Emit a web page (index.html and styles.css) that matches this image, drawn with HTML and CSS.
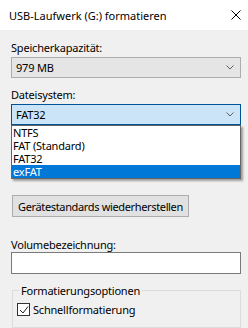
FILE: index.html
```
<!DOCTYPE html>
<html>
  <head>
    <title>USB-Laufwerk (G:) formatieren</title>
    <link rel="stylesheet" href="styles.css">
  </head>
  <body>
    <div class="titlebar">
      <span class="title">USB-Laufwerk (G:) formatieren</span>
      <svg class="close" width="10" height="10" viewBox="0 0 10 10"><path d="M0.5 0.5L9.5 9.5M9.5 0.5L0.5 9.5" stroke="#000" stroke-width="1" fill="none"/></svg>
    </div>

    <div class="content">
      <div class="label">Speicherkapazität:</div>
      <div class="combo">
        <span>979 MB</span>
        <svg class="chevron" width="8" height="5" viewBox="0 0 8 5"><path d="M0.5 0.5L4 4L7.5 0.5" stroke="#606060" fill="none"/></svg>
      </div>

      <div class="label">Dateisystem:</div>
      <div class="dropdown">
        <div class="combo combo-open">
          <span>FAT32</span>
          <svg class="chevron" width="8" height="5" viewBox="0 0 8 5"><path d="M0.5 0.5L4 4L7.5 0.5" stroke="#606060" fill="none"/></svg>
        </div>
        <ul class="list">
          <li>NTFS</li>
          <li>FAT (Standard)</li>
          <li>FAT32</li>
          <li class="selected">exFAT</li>
        </ul>
      </div>

      <button class="btn">Gerätestandards wiederherstellen</button>

      <div class="label label-volume">Volumebezeichnung:</div>
      <div class="textbox"></div>

      <fieldset class="group">
        <legend>Formatierungsoptionen</legend>
        <label class="check">
          <span class="box"><svg width="10" height="10" viewBox="0 0 10 10"><path d="M1 5L4 8L9 1.5" stroke="#222" stroke-width="1" fill="none"/></svg></span>
          Schnellformatierung
        </label>
      </fieldset>
    </div>
  </body>
</html>
```

FILE: styles.css
```
  body {
    margin: 0;
    background-color: #f0f0f0;
    font-family: "Noto Sans", "Open Sans", sans-serif;
    font-size: 11px;
    letter-spacing: -0.2px;
    color: #000;
    overflow: hidden;
  }
  /* window title */
  .titlebar {
    height: 30px;
    background-color: #fff;
    display: flex;
    align-items: center;
    padding: 0 7px 0 9px;
  }
  .title {
    flex: 1;
    font-size: 11px;
    letter-spacing: 0;
  }
  .close {
    margin-bottom: 1px;
  }
  .content {
    padding: 10px 7px 0 11px;
  }
  .label {
    line-height: 15px;
    height: 15px;
  }
  /* combo boxes */
  .combo {
    margin-top: 2px;
    height: 19px;
    border: 1px solid #adadad;
    background-color: #e5e5e5;
    display: flex;
    align-items: center;
    padding: 0 6px 0 4px;
    margin-bottom: 9px;
  }
  .combo span {
    flex: 1;
  }
  .dropdown {
    position: relative;
    margin-bottom: 70px;
  }
  .combo-open {
    background-color: #cce4f7;
    border-color: #005499;
    margin-bottom: 0;
  }
  .list {
    position: absolute;
    left: 0;
    right: 0;
    top: 100%;
    margin: 0;
    padding: 0;
    list-style: none;
    background-color: #fff;
    border: 1px solid #646464;
    box-shadow: 2px 2px 2px rgba(0, 0, 0, 0.35);
  }
  .list li {
    height: 13px;
    line-height: 13px;
    padding-left: 1px;
  }
  .list .selected {
    background-color: #0078d7;
    color: #fff;
  }
  /* button */
  .btn {
    display: block;
    margin-left: 1px;
    height: 22px;
    padding: 0 5px;
    font-family: inherit;
    font-size: 11px;
    letter-spacing: -0.35px;
    background-color: #e1e1e1;
    border: 1px solid #adadad;
    color: #000;
  }
  .label-volume {
    margin-top: 20px;
  }
  .textbox {
    height: 20px;
    background-color: #fff;
    border: 1px solid #7a7a7a;
  }
  /* group box */
  .group {
    margin: 9px 0 0 1px;
    border: 1px solid #dcdcdc;
    padding: 4px 5px 10px 4px;
  }
  .group legend {
    padding: 0 2px;
    margin-left: 2px;
    line-height: 15px;
  }
  .check {
    display: flex;
    align-items: center;
    gap: 3px;
  }
  .box {
    width: 11px;
    height: 11px;
    border: 1px solid #333;
    background-color: #fff;
    display: flex;
    align-items: center;
    justify-content: center;
  }
```
